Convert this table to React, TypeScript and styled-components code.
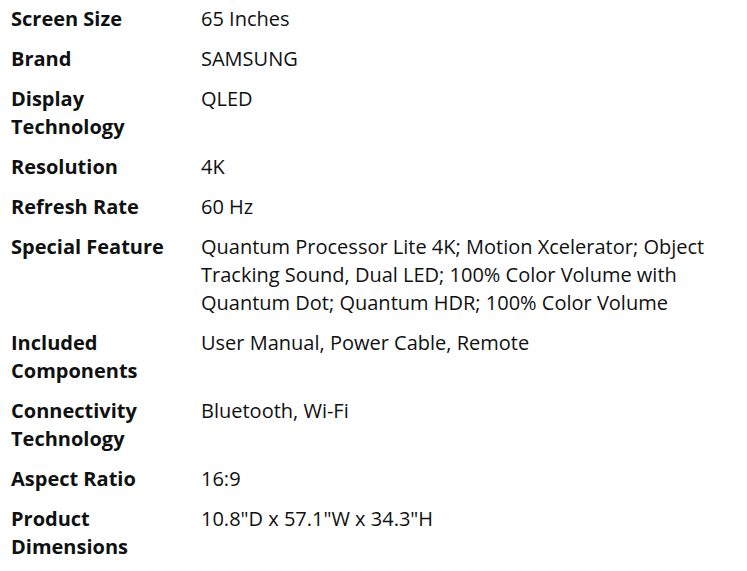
import styled, { createGlobalStyle } from "styled-components";

const specs: [string, string][] = [
  ["Screen Size", "65 Inches"],
  ["Brand", "SAMSUNG"],
  ["Display Technology", "QLED"],
  ["Resolution", "4K"],
  ["Refresh Rate", "60 Hz"],
  [
    "Special Feature",
    "Quantum Processor Lite 4K; Motion Xcelerator; Object Tracking Sound, Dual LED; 100% Color Volume with Quantum Dot; Quantum HDR; 100% Color Volume",
  ],
  ["Included Components", "User Manual, Power Cable, Remote"],
  ["Connectivity Technology", "Bluetooth, Wi-Fi"],
  ["Aspect Ratio", "16:9"],
  ["Product Dimensions", '10.8"D x 57.1"W x 34.3"H'],
];

const App = () => {
  return (
    <>
      <GlobalStyle />
      <SpecTable>
        <tbody>
          {specs.map(([label, value]) => (
            <Row key={label}>
              <Label>{label}</Label>
              <Value>{value}</Value>
            </Row>
          ))}
        </tbody>
      </SpecTable>
    </>
  );
};

const GlobalStyle = createGlobalStyle`
  body {
    margin: 0;
    background: #ffffff;
    color: #0f1111;
    font-family: "Open Sans", "Noto Sans", sans-serif;
  }
`;

const SpecTable = styled.table`
  border-collapse: collapse;
  table-layout: fixed;
  margin: 5px 0 0 11px;
  width: 720px;
  font-size: 20px;
  line-height: 28px;
`;

const Row = styled.tr``;

const Label = styled.td`
  width: 190px;
  padding: 0 10px 12px 0;
  box-sizing: border-box;
  vertical-align: top;
  font-weight: 700;
`;

const Value = styled.td`
  width: 530px;
  padding: 0 0 12px 0;
  vertical-align: top;
  font-weight: 400;
`;

export default App;
